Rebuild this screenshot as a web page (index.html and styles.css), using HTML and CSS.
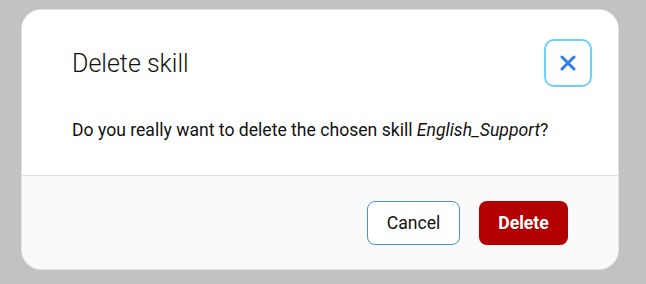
FILE: index.html
```html
<!DOCTYPE html>
<html>
<head>
<meta charset="utf-8">
<link rel="stylesheet" href="styles.css">
</head>
<body>
<div class="dialog">
  <div class="main">
    <div class="header">
      <h2 class="title">Delete skill</h2>
      <button class="close" aria-label="Close">
        <svg width="16" height="16" viewBox="0 0 16 16"><path d="M2 2 L14 14 M14 2 L2 14" stroke="#2f7fe6" stroke-width="3" stroke-linecap="round"/></svg>
      </button>
    </div>
    <p class="message">Do you really want to delete the chosen skill <em>English_Support</em>?</p>
  </div>
  <div class="footer">
    <button class="btn btn-cancel">Cancel</button>
    <button class="btn btn-delete">Delete</button>
  </div>
</div>
</body>
</html>
```
FILE: styles.css
```css
html, body {
  margin: 0;
  padding: 0;
  background: #c1c2c4;
  font-family: Roboto, "Liberation Sans", sans-serif;
}
body {
  padding: 9px 0 0 21px;
}
.dialog {
  width: 598px;
  height: 261px;
  box-sizing: border-box;
  background: #fafafa;
  border: 1px solid #e2e2e2;
  border-radius: 20px;
  overflow: hidden;
  display: flex;
  flex-direction: column;
}
.main {
  background: #ffffff;
  border-bottom: 1px solid #e0e0e0;
  padding: 29px 26px 33px 50px;
}
.header {
  display: flex;
  align-items: center;
  justify-content: space-between;
}
.title {
  margin: 0;
  font-size: 25px;
  font-weight: 300;
  color: #111;
}
.close {
  width: 48px;
  height: 48px;
  box-sizing: border-box;
  border: 2px solid #6ad0fc;
  border-radius: 10px;
  background: #fff;
  display: flex;
  align-items: center;
  justify-content: center;
  padding: 0;
}
.message {
  margin: 31px 0 0 0;
  font-size: 17.6px;
  line-height: 24px;
  color: #111;
}
.footer {
  flex: 1;
  display: flex;
  justify-content: flex-end;
  align-items: flex-start;
  gap: 19px;
  padding: 25px 50px 0 0;
}
.btn {
  height: 44px;
  border-radius: 8px;
  font-family: Roboto, "Liberation Sans", sans-serif;
  font-size: 17.6px;
  padding: 0;
}
.btn-cancel {
  width: 93px;
  background: #fff;
  border: 1px solid #4d8fe0;
  color: #111;
  font-weight: 400;
}
.btn-delete {
  width: 89px;
  background: #b30000;
  border: none;
  color: #fff;
  font-weight: 700;
}
```
